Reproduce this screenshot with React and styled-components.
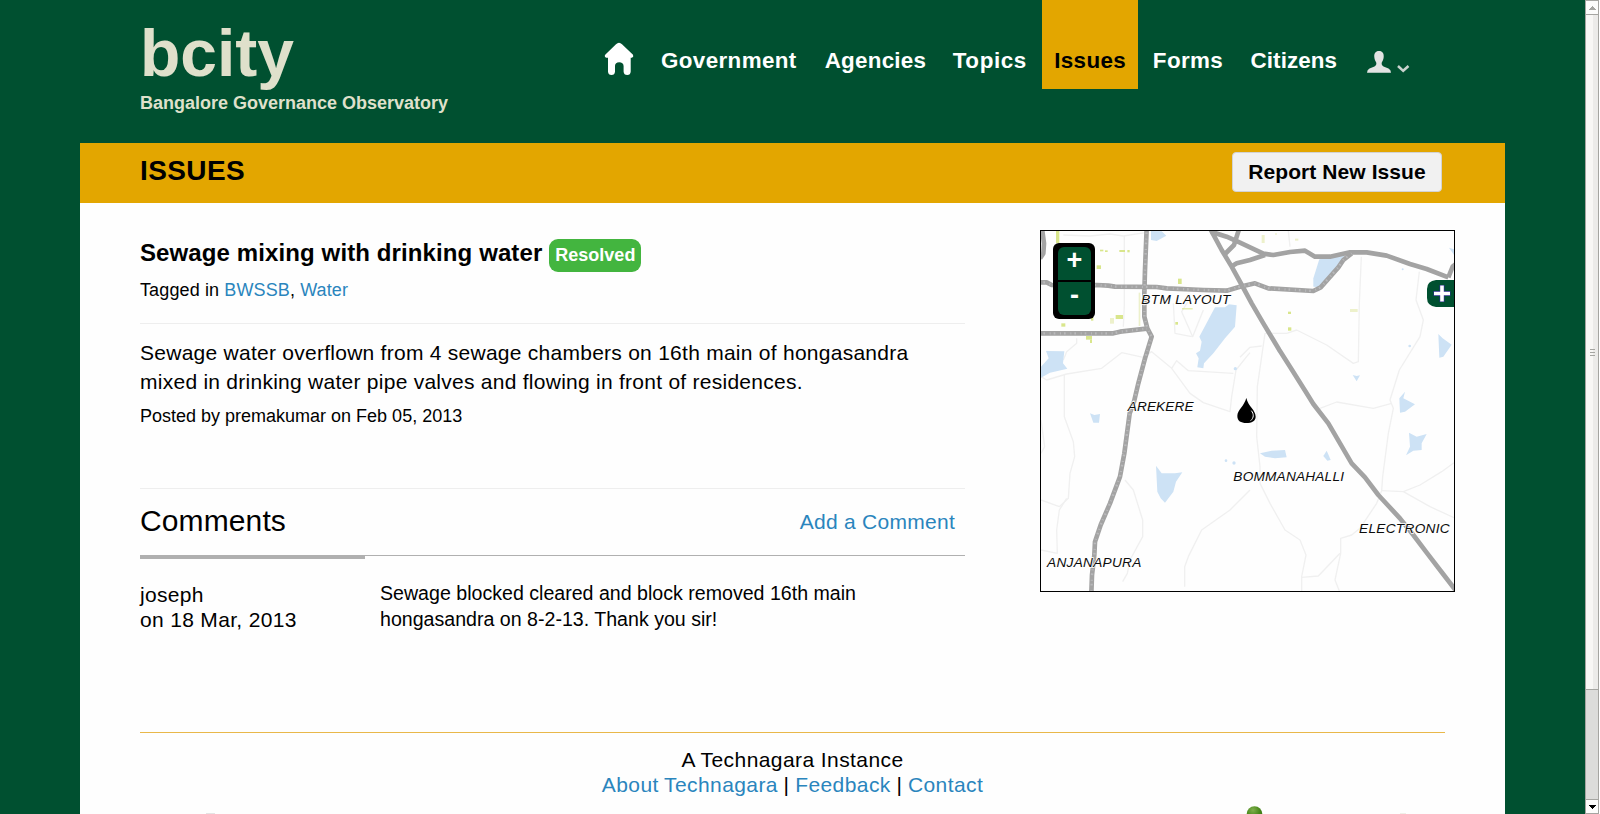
import React from "react";
import styled, { createGlobalStyle } from "styled-components";

const GREEN = "#005030";
const GOLD = "#e3a600";
const LINK = "#2a85bd";

const Global = createGlobalStyle`
  * { box-sizing: border-box; }
  html, body { margin: 0; padding: 0; height: 814px; overflow: hidden; }
  body { background: ${GREEN}; color: #000; font-family: "Liberation Sans", Arial, sans-serif; }
  h1, h2, h3, p { margin: 0; font-weight: normal; }
  a { text-decoration: none; color: ${LINK}; }
`;

const Window = styled.div`
  display: flex;
  width: 1600px;
  height: 814px;
  overflow: hidden;
`;
const Page = styled.div`
  width: 1585px;
  height: 814px;
  padding: 0 80px;
  overflow: hidden;
`;
const Header = styled.header`
  display: flex;
  align-items: flex-start;
  height: 143px;
  padding-left: 60px;
`;
const Brand = styled.div`
  flex: 0 0 465px;
  padding-top: 20px;
  color: #dfe0cb;
  font-weight: bold;
`;
const Logo = styled.h1`
  font-size: 66px;
  line-height: 66px;
  font-weight: bold;
`;
const Tagline = styled.p`
  margin-top: 6px;
  font-size: 18px;
  line-height: 22px;
  font-weight: bold;
`;
const Nav = styled.nav`
  display: flex;
  align-items: flex-start;
`;
const HomeIcon = styled.svg`
  width: 30px;
  height: 34px;
  margin: 42px 15px 0 -1px;
`;
const NavItem = styled.a`
  display: block;
  height: 89px;
  padding: 46px 12px 0;
  margin-right: ${(p) => p.$gap}px;
  font-size: 22.4px;
  line-height: 30px;
  font-weight: bold;
  letter-spacing: ${(p) => p.$tracking}px;
  background: ${(p) => (p.$active ? GOLD : "transparent")};
  color: ${(p) => (p.$active ? "#000" : "#fff")};
`;
const UserMenu = styled.svg`
  width: 44px;
  height: 24px;
  margin: 50px 0 0 18px;
`;

const TitleBar = styled.div`
  display: flex;
  justify-content: space-between;
  align-items: flex-start;
  height: 60px;
  padding: 9px 63px 0 60px;
  background: ${GOLD};
`;
const SectionTitle = styled.h2`
  font-size: 28px;
  line-height: 38px;
  font-weight: bold;
  letter-spacing: 0.4px;
`;
const ReportButton = styled.button`
  width: 210px;
  height: 40px;
  padding: 0;
  border: 1px solid #d3d3d3;
  border-radius: 4px;
  background: #f1f1f1;
  color: #000;
  font: bold 21px/38px "Liberation Sans", Arial, sans-serif;
  letter-spacing: 0.08px;
`;

const Content = styled.div`
  height: 611px;
  padding: 0 60px;
  background: #fefefe;
`;
const Columns = styled.div`
  display: flex;
  height: 529px;
`;
const Main = styled.main`
  flex: 0 0 825px;
  margin-right: 75px;
`;
const Heading = styled.div`
  display: flex;
  align-items: flex-start;
  gap: 7px;
  height: 69px;
  padding-top: 36px;
`;
const IssueTitle = styled.h3`
  font-size: 24px;
  line-height: 28px;
  font-weight: bold;
  letter-spacing: 0.11px;
`;
const Badge = styled.span`
  width: 92px;
  height: 33px;
  border-radius: 9px;
  background: #43b53f;
  color: #fff;
  text-align: center;
  font-size: 18px;
  line-height: 32px;
  font-weight: bold;
`;
const Meta = styled.p`
  font-size: 18px;
  line-height: 24px;
  height: ${(p) => p.$height}px;
  padding-top: ${(p) => p.$top}px;
  letter-spacing: ${(p) => p.$tracking || 0}px;
`;
const Story = styled.div`
  height: 166px;
  padding-top: 14px;
  border-top: 1px solid #eeeeee;
  border-bottom: 1px solid #eeeeee;
`;
const Description = styled.p`
  font-size: 21px;
  line-height: 29px;
  letter-spacing: 0.26px;
`;
const CommentsHead = styled.div`
  display: flex;
  justify-content: space-between;
  height: 67px;
  padding: 14px 10px 0 0;
  border-bottom: 1px solid #b0b0b0;
`;
const CommentsTitle = styled.h2`
  font-size: 30px;
  line-height: 36px;
  letter-spacing: 0.12px;
`;
const AddComment = styled.a`
  font-size: 21px;
  line-height: 38px;
  letter-spacing: 0.27px;
`;
const Accent = styled.div`
  width: 225px;
  height: 3px;
  background: #b0b0b0;
`;
const Comment = styled.article`
  display: flex;
  padding-top: 21px;
`;
const Author = styled.div`
  width: 240px;
  padding-top: 2px;
  font-size: 21px;
  line-height: 25px;
  letter-spacing: 0.33px;
`;
const CommentText = styled.p`
  width: 500px;
  font-size: 19.6px;
  line-height: 26px;
`;

const MapFrame = styled.div`
  position: relative;
  flex: none;
  width: 415px;
  height: 362px;
  margin-top: 27px;
  border: 1px solid #000;
  overflow: hidden;
`;
const MapSvg = styled.svg`
  display: block;
  width: 413px;
  height: 360px;
`;
const ZoomControl = styled.div`
  position: absolute;
  left: 12px;
  top: 12px;
  display: flex;
  flex-direction: column;
  gap: 2px;
  width: 42px;
  height: 76px;
  padding: 4px 4px 4px 5px;
  border-radius: 6px;
  background: #000;
`;
const ZoomButton = styled.button`
  height: 33px;
  padding: 0 0 7px;
  border: 0;
  border-radius: ${(p) => (p.$top ? "6px 6px 0 0" : "0 0 6px 6px")};
  background: ${GREEN};
  color: #fff;
  font: bold 27px/26px "Liberation Sans", Arial, sans-serif;
`;
const LayerButton = styled.svg`
  position: absolute;
  right: 0;
  top: 49px;
  width: 27px;
  height: 27px;
`;

const Footer = styled.footer`
  height: 82px;
  padding-top: 14px;
  border-top: 1px solid #e9b84a;
  text-align: center;
  font-size: 21px;
  line-height: 25px;
  letter-spacing: 0.42px;
`;
const FooterLinks = styled.div`
  word-spacing: -0.6px;
`;
const Logos = styled.svg`
  display: block;
  width: 1305px;
  height: 17px;
`;
const Scrollbar = styled.svg`
  flex: none;
  width: 15px;
  height: 814px;
`;

const roads = [
  "M350,25 L345,150 343,220 343,290 352,325 365,350 345,415 325,490 312,545 299,580 283,700 270,770 240,850 212,915 195,965 193,1005 186,1065 184,1120",
  "M28,187 L50,187 65,195 130,197 200,195 235,197 255,200 380,201 410,205 520,210 590,212 630,200 675,190 715,205 850,213 872,202 925,142 940,120 965,100",
  "M28,340 L250,340 270,335 350,326",
  "M540,25 L575,90 605,140 637,198 665,250 700,310 730,360 748,390 780,440 830,520 850,552 895,610 965,730 1005,772 1045,825 1110,895 1150,945 1190,998 1230,1050 1280,1115",
  "M543,35 L590,50 630,68 700,101 730,105 780,96 825,92 855,110 900,110 960,97 1010,97 1070,107 1140,132 1190,147 1255,172",
  "M603,140 L620,130 660,120 705,105",
  "M627,28 L612,75 585,102",
  "M1255,172 L1268,140 1280,130",
  "M36,25 L42,70 40,100 30,115",
];
const lanes = [
  "M100,45 L180,48 240,42 280,48 345,38",
  "M283,48 L283,255 280,320",
  "M33,470 L50,480 110,462 215,445 275,398 340,412 365,395 425,445 480,520 520,548 600,575 605,530 618,450 650,410 660,398",
  "M425,445 L440,422 475,452 610,460",
  "M140,355 L140,370 110,395 100,420",
  "M103,465 L103,590 130,665 134,710 120,760 115,835 88,860 33,840",
  "M110,835 L88,870 80,930 82,1000 33,990",
  "M33,600 L44,680 33,700",
  "M480,235 L455,275 488,350 520,270 M430,250 L435,340 485,350",
  "M775,33 L780,80 M994,110 L988,250 985,425 970,430 890,375 800,330 770,340 705,340 695,410 682,500 680,650 690,740 690,790 720,850 765,930 810,960 828,1005 815,1070 815,1113",
  "M630,412 L660,382 695,378",
  "M1168,155 L1158,240 1180,300 1170,350 1108,450 1080,540 1090,565 1075,640 1058,770 1055,812 1040,850 990,925 965,945 932,955 932,1000 915,1080 928,1113",
  "M870,565 L920,546 1030,565 1085,550",
  "M1055,812 L1120,815 1170,795 1235,755 1272,728 M1120,815 L1200,860 1272,893",
  "M815,1072 L865,1068 930,1000",
  "M660,810 L630,840 600,870 515,930 475,1010 464,1040 464,1100",
  "M285,780 L310,810 338,900 338,950 300,1020 292,1060 278,1085",
];
const lakes = [
  "M363,33 L395,34 409,47 380,63 363,60Z",
  "M555,262 L585,262 597,253 620,256 615,320 585,355 550,400 522,430 520,445 502,442 506,415 498,400 510,392 515,365 508,350Z",
  "M48,393 L103,394 99,430 112,446 60,458 33,473 33,440 56,415Z",
  "M868,118 L945,106 920,145 872,202 850,200 850,175Z",
  "M180,580 L193,585 210,582 207,608 190,608Z",
  "M378,737 L395,760 435,760 457,757 438,785 430,815 405,848 392,835 382,815Z",
  "M1225,342 L1238,355 1265,374 1240,410 1228,413Z",
  "M968,465 L980,468 990,466 980,484Z",
  "M1125,515 L1120,535 1155,553 1125,575 1110,578 1108,535Z",
  "M1137,638 L1160,650 1190,642 1175,670 1175,690 1150,692 1128,706 1140,680Z",
  "M690,700 L725,692 765,690 770,712 735,715 705,710Z",
  "M890,692 L897,708 902,720 892,722 880,708Z",
  "M1257,83 L1272,88 1272,105Z",
];
const parks = [
  [78, 33, 10, 36], [210, 89, 10, 5], [225, 91, 8, 5], [268, 90, 17, 6], [292, 90, 7, 7],
  [200, 136, 13, 11], [444, 176, 11, 16], [257, 285, 22, 12],
  [94, 310, 12, 10], [168, 348, 18, 11], [180, 359, 6, 10], [436, 306, 8, 8], [183, 290, 7, 12],
  [456, 265, 32, 3], [774, 275, 9, 7], [774, 322, 10, 10],
];
const paleParks = [
  [695, 45, 9, 24], [960, 267, 23, 9], [795, 56, 10, 6], [735, 40, 6, 4],
  [240, 294, 12, 17], [326, 218, 5, 100],
];
const labels = [
  ["BTM LAYOUT", 334, 253, 267],
  ["AREKERE", 293, 573, 198],
  ["ANJANAPURA", 51, 1040, 283],
  ["BOMMANAHALLI", 610, 784, 332],
  ["ELECTRONIC", 987, 940, 272],
];

function IssueMap() {
  return (
    <MapFrame>
      <MapSvg viewBox="33 33 1239 1080">
        <rect x="33" y="33" width="1239" height="1080" fill="#fefefe" />
        <g fill="none" stroke="#f0f0f0" strokeWidth="4" strokeLinejoin="round">
          {lanes.map((d) => <path key={d} d={d} />)}
        </g>
        <g fill="#cde2f5">
          {lakes.map((d) => <path key={d} d={d} />)}
          <circle cx="616" cy="446" r="5" />
          <circle cx="588" cy="722" r="4" />
          <circle cx="612" cy="729" r="5" />
          <circle cx="748" cy="392" r="6" />
          <circle cx="1139" cy="378" r="4" />
          <circle cx="1118" cy="148" r="3" />
        </g>
        <g fill="#d9e68c">
          {parks.map(([x, y, w, h]) => <rect key={x + "-" + y} x={x} y={y} width={w} height={h} />)}
        </g>
        <g fill="#edf1cb">
          {paleParks.map(([x, y, w, h]) => <rect key={x + "-" + y} x={x} y={y} width={w} height={h} />)}
        </g>
        <g fill="none" strokeLinejoin="round">
          {roads.map((d) => <path key={d} d={d} stroke="#a3a3a3" strokeWidth="14" />)}
          {roads.slice(0, 3).map((d) => (
            <path key={d} d={d} stroke="#b9b9bb" strokeWidth="7" strokeDasharray="3 9 5 14" />
          ))}
        </g>
        <g fontFamily="Liberation Sans, Arial, sans-serif" fontStyle="italic" fontSize="41" fill="#0c0c0c" stroke="#fefefe" strokeWidth="4" paintOrder="stroke">
          {labels.map(([t, x, y, w]) => (
            <text key={t} x={x} y={y} textLength={w}>{t}</text>
          ))}
        </g>
        <path d="M649,534 C655,560 677,570 677,590 C677,603 665,609 649,609 C633,609 622,603 622,588 C622,570 643,558 649,534Z" fill="#000" />
        <path d="M664,572 C672,582 672,593 662,602" fill="none" stroke="#fff" strokeWidth="3" />
      </MapSvg>
      <ZoomControl>
        <ZoomButton $top>+</ZoomButton>
        <ZoomButton>-</ZoomButton>
      </ZoomControl>
      <LayerButton viewBox="0 0 27 27">
        <path d="M27,0 H9 Q0,1 0,9 V18 Q0,26 9,27 H27Z" fill={GREEN} />
        <path d="M15,5 V22 M6.5,13.5 H23.5" stroke="#2a2a8c" strokeWidth="5" />
        <path d="M15,5.5 V21.5 M7,13.5 H23" stroke="#fff" strokeWidth="3.6" />
      </LayerButton>
    </MapFrame>
  );
}

const navItems = [
  ["Government", 4, 0.38], ["Agencies", 2.5, 0.25], ["Topics", 3.4, 0.6],
  ["Issues", 2.8, 0.35], ["Forms", 3.5, 0.35], ["Citizens", 0, 0.08],
];

export default function App() {
  return (
    <Window>
      <Global />
      <Page>
        <Header>
          <Brand>
            <Logo>bcity</Logo>
            <Tagline>Bangalore Governance Observatory</Tagline>
          </Brand>
          <Nav>
            <HomeIcon viewBox="0 0 30 34">
              <path d="M15,0.8 Q16.5,0.8 18,2.3 L29,12.7 Q30,14.5 28,15.8 H26.7 V29.5 Q26.5,33 23.3,33 Q19.8,33 19.6,29.5 V24 Q19.3,20.3 15.2,20.3 Q11.2,20.3 11,24 V29.5 Q10.8,33 7.5,33 Q4.2,33 4,29.5 V15.8 H2.3 Q0,14.5 1.2,12.7 L12,2.3 Q13.5,0.8 15,0.8Z" fill="#fff" />
            </HomeIcon>
            {navItems.map(([name, gap, tracking]) => (
              <NavItem key={name} $gap={gap} $tracking={tracking} $active={name === "Issues"}>{name}</NavItem>
            ))}
            <UserMenu viewBox="0 0 44 24">
              <path d="M12,1 C15.5,1 17,3.5 16.7,7 C16.5,10 15.3,11.5 14.6,13 Q14.3,15.4 16.5,16.4 L21.5,18.6 Q24,20 24,22.8 H0 Q0,20 2.5,18.6 L7.5,16.4 Q9.7,15.4 9.4,13 C8.7,11.5 7.5,10 7.3,7 C7,3.5 8.5,1 12,1Z" fill="#e3e3e3" />
              <path d="M31,16 L36.2,20.8 L41.5,16" fill="none" stroke="#c9d3ce" strokeWidth="2.5" />
            </UserMenu>
          </Nav>
        </Header>
        <TitleBar>
          <SectionTitle>ISSUES</SectionTitle>
          <ReportButton>Report New Issue</ReportButton>
        </TitleBar>
        <Content>
          <Columns>
            <Main>
              <Heading>
                <IssueTitle>Sewage mixing with drinking water</IssueTitle>
                <Badge>Resolved</Badge>
              </Heading>
              <Meta $height={51} $top={6} $tracking={0.12}>
                Tagged in <a>BWSSB</a>, <a>Water</a>
              </Meta>
              <Story>
                <Description>
                  Sewage water overflown from 4 sewage chambers on 16th main of hongasandra
                  mixed in drinking water pipe valves and flowing in front of residences.
                </Description>
                <Meta $height={30} $top={8}>Posted by premakumar on Feb 05, 2013</Meta>
              </Story>
              <CommentsHead>
                <CommentsTitle>Comments</CommentsTitle>
                <AddComment>Add a Comment</AddComment>
              </CommentsHead>
              <Accent />
              <Comment>
                <Author>joseph<br />on 18 Mar, 2013</Author>
                <CommentText>Sewage blocked cleared and block removed 16th main hongasandra on 8-2-13. Thank you sir!</CommentText>
              </Comment>
            </Main>
            <IssueMap />
          </Columns>
          <Footer>
            <div>A Technagara Instance</div>
            <FooterLinks>
              <a>About Technagara</a> | <a>Feedback</a> | <a>Contact</a>
            </FooterLinks>
            <Logos viewBox="0 0 1305 17">
              <defs>
                <radialGradient id="leaf" cx="0.4" cy="0.25" r="0.7">
                  <stop offset="0" stopColor="#7fae4c" />
                  <stop offset="0.6" stopColor="#4a8a1c" />
                  <stop offset="1" stopColor="#34700e" />
                </radialGradient>
              </defs>
              <circle cx="1114.5" cy="17" r="7.8" fill="url(#leaf)" />
              <rect x="1260" y="16" width="6" height="1" fill="#efefe8" />
              <rect x="66" y="16" width="9" height="1" fill="#e4e4e4" />
            </Logos>
          </Footer>
        </Content>
      </Page>
      <Scrollbar viewBox="0 0 15 814" shapeRendering="crispEdges">
        <rect width="15" height="814" fill="#fff" />
        <rect x="0" y="0" width="14" height="814" fill="#a5a5a1" />
        <rect x="1" y="1" width="12" height="13" fill="#fcfcfb" />
        <rect x="1" y="15" width="7" height="674" fill="#f8f7f5" />
        <rect x="8" y="15" width="5" height="674" fill="#ecebe9" />
        <rect x="1" y="690" width="12" height="109" fill="#dcdcda" />
        <rect x="1" y="800" width="12" height="13" fill="#fcfcfb" />
        <path d="M4,10 L7.5,6 L11,10Z" fill="#a5a5a1" />
        <path d="M3,805 H11 L7,809Z" fill="#000" />
        <path d="M5,349.5 H10 M5,352.5 H10 M5,355.5 H10" stroke="#a5a5a1" />
      </Scrollbar>
    </Window>
  );
}
